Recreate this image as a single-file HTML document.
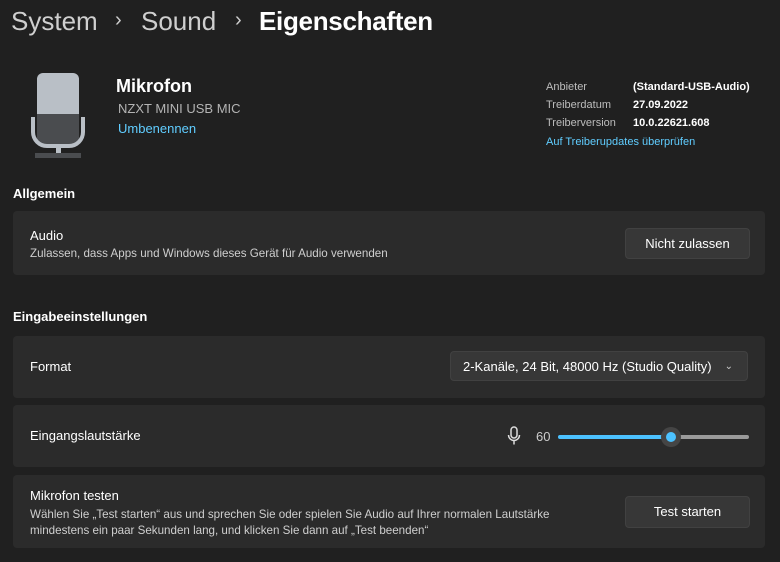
<!DOCTYPE html>
<html><head><style>
body{margin:0;width:780px;height:562px;background:#202020;font-family:"Segoe UI","Liberation Sans",sans-serif;color:#fff;position:relative;overflow:hidden}
.a{position:absolute;white-space:nowrap}
.card{position:absolute;left:13px;width:752px;background:#2b2b2b;border-radius:4px}
.btn{position:absolute;background:#373737;border:1px solid #414141;border-radius:4px;font-size:13px;text-align:center;color:#fff}
.s{color:#cfcfcf;font-size:11px}
.d{font-size:11.6px}
</style></head><body>
<div class="a" style="left:11px;top:6px;font-size:26px;color:#cfcfcf">System</div>
<div class="a" style="left:115px;top:9px;font-size:20px;color:#cfcfcf">›</div>
<div class="a" style="left:141px;top:6px;font-size:26px;color:#cfcfcf">Sound</div>
<div class="a" style="left:235px;top:9px;font-size:20px;color:#cfcfcf">›</div>
<div class="a" style="left:259px;top:6px;font-size:26px;font-weight:600;letter-spacing:-0.3px">Eigenschaften</div>

<svg class="a" style="left:28px;top:70px" width="62" height="92" viewBox="0 0 62 92">
<rect x="9" y="3" width="42" height="72" rx="6" fill="#b9bfc6"/>
<path d="M9 44h42v25a6 6 0 0 1-6 6H15a6 6 0 0 1-6-6z" fill="#4a4c4f"/>
<path d="M5 47v15a14 14 0 0 0 14 14h22a14 14 0 0 0 14-14V47" fill="none" stroke="#b9bfc6" stroke-width="4"/>
<rect x="28" y="76" width="5" height="12" fill="#b9bfc6"/>
<rect x="7" y="83" width="46" height="5" fill="#4a4c4f"/>
</svg>
<div class="a" style="left:116px;top:76px;font-size:18px;font-weight:600">Mikrofon</div>
<div class="a" style="left:118px;top:101px;font-size:13px;color:#b4b4b4">NZXT MINI USB MIC</div>
<div class="a" style="left:118px;top:121px;font-size:13px;color:#60cdff">Umbenennen</div>

<div class="a s" style="left:546px;top:81px;color:#bdbdbd">Anbieter</div>
<div class="a s" style="left:546px;top:99px;color:#bdbdbd">Treiberdatum</div>
<div class="a s" style="left:546px;top:117px;color:#bdbdbd">Treiberversion</div>
<div class="a s" style="left:633px;top:81px;color:#fff;font-weight:600">(Standard-USB-Audio)</div>
<div class="a s" style="left:633px;top:99px;color:#fff;font-weight:600">27.09.2022</div>
<div class="a s" style="left:633px;top:117px;color:#fff;font-weight:600">10.0.22621.608</div>
<div class="a s" style="left:546px;top:136px;color:#60cdff">Auf Treiberupdates überprüfen</div>

<div class="a" style="left:13px;top:186px;font-size:13px;font-weight:600">Allgemein</div>
<div class="card" style="top:211px;height:64px"></div>
<div class="a" style="left:30px;top:228px;font-size:13px">Audio</div>
<div class="a s d" style="left:30px;top:247px">Zulassen, dass Apps und Windows dieses Gerät für Audio verwenden</div>
<div class="btn" style="left:625px;top:228px;width:123px;height:29px;line-height:29px">Nicht zulassen</div>

<div class="a" style="left:13px;top:309px;font-size:13px;font-weight:600">Eingabeeinstellungen</div>
<div class="card" style="top:336px;height:62px"></div>
<div class="a" style="left:30px;top:359px;font-size:13px">Format</div>
<div class="btn" style="left:450px;top:351px;width:298px;height:30px;line-height:30px;text-align:left;padding-left:12px;box-sizing:border-box">2-Kanäle, 24 Bit, 48000 Hz (Studio Quality)<span style="position:absolute;right:14px;font-size:10px;color:#ccc">⌄</span></div>

<div class="card" style="top:405px;height:62px"></div>
<div class="a" style="left:30px;top:428px;font-size:13px">Eingangslautstärke</div>
<svg class="a" style="left:507px;top:426px" width="14" height="20" viewBox="0 0 14 20"><rect x="4" y="1" width="6" height="11" rx="3" fill="none" stroke="#ddd" stroke-width="1.5"/><path d="M1.5 9a5.5 5.5 0 0 0 11 0M7 14.5v4" fill="none" stroke="#ddd" stroke-width="1.5"/></svg>
<div class="a" style="left:536px;top:429px;font-size:13px;color:#ccc">60</div>
<div class="a" style="left:558px;top:435px;width:113px;height:4px;border-radius:2px;background:#4cc2ff"></div>
<div class="a" style="left:671px;top:435px;width:78px;height:4px;border-radius:2px;background:#9a9a9a"></div>
<div class="a" style="left:661px;top:427px;width:20px;height:20px;border-radius:50%;background:#454545"></div>
<div class="a" style="left:666px;top:432px;width:10px;height:10px;border-radius:50%;background:#4cc2ff"></div>

<div class="card" style="top:475px;height:73px"></div>
<div class="a" style="left:30px;top:488px;font-size:13px">Mikrofon testen</div>
<div class="a s d" style="left:30px;top:507px;line-height:16px">Wählen Sie „Test starten“ aus und sprechen Sie oder spielen Sie Audio auf Ihrer normalen Lautstärke<br>mindestens ein paar Sekunden lang, und klicken Sie dann auf „Test beenden“</div>
<div class="btn" style="left:625px;top:496px;width:123px;height:30px;line-height:30px">Test starten</div>
</body></html>
